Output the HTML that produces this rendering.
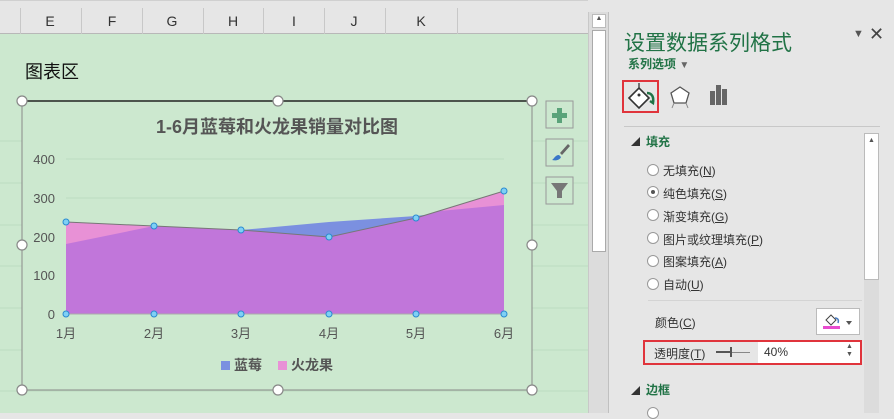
<!DOCTYPE html><html><head><meta charset="utf-8"><style>
*{margin:0;padding:0;box-sizing:border-box}
body{width:894px;height:413px;overflow:hidden;background:#e6e6e6;position:relative;font-family:"Liberation Sans","Noto Sans CJK SC",sans-serif;color:#444}
.a{position:absolute}
.col{top:13px;font-size:14px;color:#333;width:40px;text-align:center}
.r{font-size:12px;color:#333}
.rad{width:12px;height:12px;border:1px solid #999;border-radius:50%;background:#fff}
</style></head><body>
<div class="a" style="left:0;top:0;width:588px;height:34px;background:#e6e6e6;border-top:1px solid #d0d0d0;border-bottom:1px solid #b8b8b8"></div>
<div class="a" style="left:20px;top:8px;width:1px;height:26px;background:#c8c8c8"></div>
<div class="a" style="left:81px;top:8px;width:1px;height:26px;background:#c8c8c8"></div>
<div class="a" style="left:142px;top:8px;width:1px;height:26px;background:#c8c8c8"></div>
<div class="a" style="left:203px;top:8px;width:1px;height:26px;background:#c8c8c8"></div>
<div class="a" style="left:263px;top:8px;width:1px;height:26px;background:#c8c8c8"></div>
<div class="a" style="left:324px;top:8px;width:1px;height:26px;background:#c8c8c8"></div>
<div class="a" style="left:385px;top:8px;width:1px;height:26px;background:#c8c8c8"></div>
<div class="a" style="left:457px;top:8px;width:1px;height:26px;background:#c8c8c8"></div>
<div class="a col" style="left:30px">E</div><div class="a col" style="left:92px">F</div><div class="a col" style="left:152px">G</div><div class="a col" style="left:213px">H</div><div class="a col" style="left:274px">I</div><div class="a col" style="left:334px">J</div><div class="a col" style="left:401px">K</div>
<div class="a" style="left:0;top:34px;width:588px;height:379px;background:#cce8cf"></div>
<div class="a" style="left:25px;top:58px;font-size:18px;color:#111">图表区</div>
<svg class="a" style="left:0;top:34px" width="588" height="379">
<g stroke="#bcdcc0" stroke-width="1"><line x1="0" y1="107" x2="588" y2="107"/><line x1="0" y1="149" x2="588" y2="149"/><line x1="0" y1="191" x2="588" y2="191"/><line x1="0" y1="232" x2="588" y2="232"/><line x1="0" y1="274" x2="588" y2="274"/><line x1="0" y1="316" x2="588" y2="316"/><line x1="0" y1="357" x2="588" y2="357"/></g>
<rect x="22" y="67" width="510" height="289" fill="#cce8cf" stroke="#8a8a8a"/>
<line x1="22" y1="67" x2="532" y2="67" stroke="#222" stroke-width="1.5"/>
<text x="277" y="99" font-size="18" font-weight="bold" fill="#555" text-anchor="middle" font-family="Liberation Sans,Noto Sans CJK SC,sans-serif">1-6月蓝莓和火龙果销量对比图</text>
<g stroke="#bcdcc0"><line x1="66" y1="125" x2="504" y2="125"/><line x1="66" y1="164" x2="504" y2="164"/><line x1="66" y1="203" x2="504" y2="203"/><line x1="66" y1="241" x2="504" y2="241"/></g>
<g font-size="13" fill="#555" text-anchor="end" font-family="Liberation Sans,sans-serif"><text x="55" y="130">400</text><text x="55" y="169">300</text><text x="55" y="208">200</text><text x="55" y="246">100</text><text x="55" y="285">0</text></g>
<polygon points="66,210 154,192 241,196 329,188 416,182 504,171 504,280 66,280" fill="#7b90e0"/>
<polygon points="66,188 154,192 241,196 329,203 416,184 504,157 504,280 66,280" fill="#e891d6"/>
<polygon points="66,210 154,192 241,196 329,203 416,184 440,177 504,171 504,280 66,280" fill="#c176da"/>
<polyline points="66,188 154,192 241,196 329,203 416,184 504,157" fill="none" stroke="#777" stroke-width="1"/>
<line x1="66" y1="280" x2="504" y2="280" stroke="#aaa"/>
<g fill="#7fd0f5" stroke="#2a8ad0" stroke-width="1"><circle cx="66" cy="188" r="3"/><circle cx="154" cy="192" r="3"/><circle cx="241" cy="196" r="3"/><circle cx="329" cy="203" r="3"/><circle cx="416" cy="184" r="3"/><circle cx="504" cy="157" r="3"/><circle cx="66" cy="280" r="3"/><circle cx="154" cy="280" r="3"/><circle cx="241" cy="280" r="3"/><circle cx="329" cy="280" r="3"/><circle cx="416" cy="280" r="3"/><circle cx="504" cy="280" r="3"/></g>
<g font-size="13" fill="#555" text-anchor="middle" font-family="Liberation Sans,Noto Sans CJK SC,sans-serif"><text x="66" y="304">1月</text><text x="154" y="304">2月</text><text x="241" y="304">3月</text><text x="329" y="304">4月</text><text x="416" y="304">5月</text><text x="504" y="304">6月</text></g>
<rect x="221" y="327" width="9" height="9" fill="#7b90e0"/><text x="234" y="336" font-size="14" font-weight="bold" fill="#555" font-family="Noto Sans CJK SC,sans-serif">蓝莓</text>
<rect x="278" y="327" width="9" height="9" fill="#e891d6"/><text x="291" y="336" font-size="14" font-weight="bold" fill="#555" font-family="Noto Sans CJK SC,sans-serif">火龙果</text>
<g fill="#fff" stroke="#888" stroke-width="1.2"><circle cx="22" cy="67" r="5"/><circle cx="278" cy="67" r="5"/><circle cx="532" cy="67" r="5"/><circle cx="22" cy="211" r="5"/><circle cx="532" cy="211" r="5"/><circle cx="22" cy="356" r="5"/><circle cx="278" cy="356" r="5"/><circle cx="532" cy="356" r="5"/></g>
<g fill="#cce8cf" stroke="#999"><rect x="546" y="67" width="27" height="27"/><rect x="546" y="105" width="27" height="27"/><rect x="546" y="143" width="27" height="27"/></g>
<path d="M557 74h5v5h5v5h-5v5h-5v-5h-5v-5h5z" fill="#5aa37a"/>
<path d="M568 110l-8 9 2 2 8-9z" fill="#666"/><path d="M552 126c2-1 3-5 7-5l2 2c-1 3-5 4-9 3z" fill="#3a78c8"/>
<path d="M551 149h17l-6 8v7h-5v-7z" fill="#777"/>
</svg>
<div class="a" style="left:588px;top:12px;width:21px;height:401px;background:#dcdcdc;border-left:1px solid #c8c8c8;border-right:1px solid #c0c0c0"></div>
<div class="a" style="left:592px;top:14px;width:14px;height:14px;background:#fff;border:1px solid #bbb;font-size:7px;text-align:center;color:#555">▲</div>
<div class="a" style="left:592px;top:30px;width:14px;height:222px;background:#fff;border:1px solid #aaa"></div>
<div class="a" style="left:610px;top:0;width:284px;height:413px;background:#e6e6e6"></div>
<div class="a" style="left:624px;top:27px;font-size:21px;color:#217346">设置数据系列格式</div>
<div class="a" style="left:853px;top:28px;font-size:11px;color:#555">▼</div>
<div class="a" style="left:869px;top:24px;font-size:18px;color:#444">✕</div>
<div class="a" style="left:628px;top:55px;font-size:12px;font-weight:bold;color:#217346">系列选项 <span style="color:#666;font-size:10px">▼</span></div>
<div class="a" style="left:622px;top:80px;width:37px;height:33px;border:2px solid #e0343c"></div>
<svg class="a" style="left:622px;top:80px" width="120" height="35">
<path d="M7 18l10-10 10 10-10 10z" fill="#fff" stroke="#333" stroke-width="1.6"/><path d="M17 8V3" stroke="#333" stroke-width="1.3"/><circle cx="17" cy="15" r="1.5" fill="#333"/>
<path d="M25 13c5 0 7 4 6 10l-3-2" fill="none" stroke="#217346" stroke-width="2.5"/>
<path d="M58 7l9 6-3 10h-12l-3-10z" fill="#fff" stroke="#555" stroke-width="1.3"/><path d="M52 23l-2 5M64 23l2 5" stroke="#888"/>
<rect x="88" y="11" width="5" height="14" fill="#666"/><rect x="94" y="5" width="5" height="20" fill="#666"/><rect x="100" y="9" width="5" height="16" fill="#666"/>
</svg>
<div class="a" style="left:624px;top:126px;width:256px;height:1px;background:#c8c8c8"></div>
<div class="a" style="left:864px;top:133px;width:15px;height:280px;background:#dcdcdc"></div>
<div class="a" style="left:864px;top:133px;width:15px;height:147px;background:#fff;border:1px solid #bbb;font-size:7px;text-align:center;color:#555;line-height:14px">▲</div>
<div class="a" style="left:631px;top:135px;font-size:9px;color:#333">◢</div>
<div class="a" style="left:646px;top:133px;font-size:12px;font-weight:bold;color:#217346">填充</div>
<div class="a rad" style="left:647px;top:164px"></div><div class="a r" style="left:663px;top:162px">无填充(<u>N</u>)</div>
<div class="a rad" style="left:647px;top:186px"><div style="width:4px;height:4px;background:#555;border-radius:50%;margin:3px"></div></div><div class="a r" style="left:663px;top:185px">纯色填充(<u>S</u>)</div>
<div class="a rad" style="left:647px;top:209px"></div><div class="a r" style="left:663px;top:208px">渐变填充(<u>G</u>)</div>
<div class="a rad" style="left:647px;top:232px"></div><div class="a r" style="left:663px;top:231px">图片或纹理填充(<u>P</u>)</div>
<div class="a rad" style="left:647px;top:255px"></div><div class="a r" style="left:663px;top:253px">图案填充(<u>A</u>)</div>
<div class="a rad" style="left:647px;top:278px"></div><div class="a r" style="left:663px;top:276px">自动(<u>U</u>)</div>
<div class="a" style="left:648px;top:300px;width:214px;height:1px;background:#d4d4d4"></div>
<div class="a r" style="left:655px;top:314px">颜色(<u>C</u>)</div>
<div class="a" style="left:816px;top:308px;width:44px;height:27px;background:#fff;border:1px solid #bbb"></div>
<svg class="a" style="left:820px;top:312px" width="38" height="20"><path d="M6 8l5-5 5 5-5 5z" fill="#fff" stroke="#444"/><path d="M15 6c3 0 4 2 3 5" stroke="#4a7cc0" fill="none" stroke-width="1.5"/><rect x="3" y="14" width="17" height="3" fill="#e84ccf"/><path d="M26 9h6l-3 4z" fill="#555"/></svg>
<div class="a" style="left:643px;top:340px;width:219px;height:25px;border:2px solid #e0343c;background:#e6e6e6"></div>
<div class="a" style="left:758px;top:342px;width:102px;height:21px;background:#fff"></div>
<div class="a r" style="left:654px;top:345px">透明度(<u>T</u>)</div>
<div class="a" style="left:716px;top:352px;width:34px;height:1px;background:#888"></div><div class="a" style="left:716px;top:351px;width:14px;height:2px;background:#555"></div><div class="a" style="left:730px;top:347px;width:2px;height:10px;background:#555"></div>
<div class="a r" style="left:764px;top:345px">40%</div>
<div class="a" style="left:846px;top:343px;font-size:7px;color:#555;line-height:8px">▲<br>▼</div>
<div class="a" style="left:631px;top:384px;font-size:9px;color:#333">◢</div>
<div class="a" style="left:646px;top:381px;font-size:12px;font-weight:bold;color:#217346">边框</div>
<div class="a rad" style="left:647px;top:407px"></div>
</body></html>
